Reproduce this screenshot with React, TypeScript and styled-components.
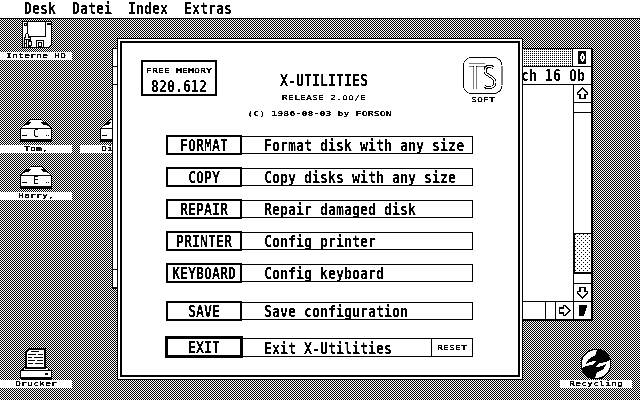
import styled, { createGlobalStyle } from "styled-components";

const GlobalStyle = createGlobalStyle`
  html, body {
    margin: 0;
    padding: 0;
    background: #fff;
    overflow: hidden;
  }
`;

const rows = [
  { name: "FORMAT", text: "Format disk with any size" },
  { name: "COPY", text: "Copy disks with any size" },
  { name: "REPAIR", text: "Repair damaged disk" },
  { name: "PRINTER", text: "Config printer" },
  { name: "KEYBOARD", text: "Config keyboard" },
];

const App = () => {
  return (
    <Screen>
      <GlobalStyle />
      <MenuBar>
        <BigText>Desk</BigText>
        <BigText>Datei</BigText>
        <BigText>Index</BigText>
        <BigText>Extras</BigText>
      </MenuBar>
      <Desktop>
        <DeskIcon $x={0} $y={1}>
          <FloppyIcon />
          <IconLabel><SmallText>Interne HD</SmallText></IconLabel>
        </DeskIcon>
        <DeskIcon $x={0} $y={100}>
          <DriveIcon letter="C" />
          <IconLabel><SmallText>Tom,</SmallText></IconLabel>
        </DeskIcon>
        <DeskIcon $x={80} $y={100}>
          <DriveIcon letter="D" />
          <IconLabel><SmallText>Dick,</SmallText></IconLabel>
        </DeskIcon>
        <DeskIcon $x={0} $y={147}>
          <DriveIcon letter="E" />
          <IconLabel><SmallText>Harry,</SmallText></IconLabel>
        </DeskIcon>
        <DeskIcon $x={0} $y={329}>
          <PrinterIcon />
          <IconLabel><SmallText>Drucker</SmallText></IconLabel>
        </DeskIcon>
        <DeskIcon $x={560} $y={329}>
          <RecycleIcon />
          <IconLabel><SmallText>Recycling</SmallText></IconLabel>
        </DeskIcon>

        <Window $x={112} $y={29} $w={40} $h={241}>
          <BarRow />
          <BarRow />
          <WindowBody />
          <HBar />
        </Window>

        <Window $x={500} $y={29} $w={93} $h={273}>
          <BarRow>
            <TitleDots />
            <Closer>
              <svg width="18" height="17" viewBox="0 0 18 17" shapeRendering="crispEdges">
                <path d="M5 2h8v13H5z" fill="#000" />
                <path d="M9 4h1v1h1v2h1v3h-1v2h-1v1H9v-1H8v-2H7V7h1V5h1z" fill="#fff" />
                <path d="M9 7h1v3H9z" fill="#000" />
              </svg>
            </Closer>
          </BarRow>
          <BarRow>
            <InfoText><BigText>ch 16 Ob</BigText></InfoText>
          </BarRow>
          <WindowBody>
            <Content />
            <ScrollBar>
              <ArrowCell $h={18} $line>
                <ArrowIcon dir={0} />
              </ArrowCell>
              <SpareCell />
              <Track />
              <Thumb />
              <SpareCell />
              <ArrowCell $h={17}>
                <ArrowIcon dir={180} />
              </ArrowCell>
            </ScrollBar>
          </WindowBody>
          <HBar>
            <Filler />
            <HSpare />
            <HArrow><ArrowIcon dir={90} /></HArrow>
            <Sizer>
              <svg width="17" height="17" viewBox="0 0 17 17" shapeRendering="crispEdges">
                <path d="M5 3h8v3h-1v3h-1v3h-1v2H5z" fill="#000" />
              </svg>
            </Sizer>
          </HBar>
        </Window>

        <Dialog>
          <Panel>
            <Header>
              <MemoryBox>
                <SmallText>FREE MEMORY</SmallText>
                <BigText>820.612</BigText>
              </MemoryBox>
              <TitleBlock>
                <BigText>X-UTILITIES</BigText>
                <Release><SmallText>RELEASE 2.00/E</SmallText></Release>
                <Copyright><SmallText>(C) 1986-08-03 by FORSON</SmallText></Copyright>
              </TitleBlock>
              <LogoBlock>
                <LogoIcon />
                <SmallText>SOFT</SmallText>
              </LogoBlock>
            </Header>
            {rows.map((r) => (
              <Row key={r.name}>
                <ActionButton><BigText>{r.name}</BigText></ActionButton>
                <Field><BigText>{r.text}</BigText></Field>
              </Row>
            ))}
            <Row $top={6}>
              <ActionButton><BigText>SAVE</BigText></ActionButton>
              <Field><BigText>Save configuration</BigText></Field>
            </Row>
            <Row $top={4}>
              <ExitButton><BigText>EXIT</BigText></ExitButton>
              <ExitField>
                <BigText>Exit X-Utilities</BigText>
                <ResetCell><SmallText>RESET</SmallText></ResetCell>
              </ExitField>
            </Row>
          </Panel>
        </Dialog>
      </Desktop>
    </Screen>
  );
};

const FloppyIcon = () => (
  <svg width="32" height="32" viewBox="0 0 32 32" shapeRendering="crispEdges">
    <path d="M2.500 1.500H31.500V24.500L28.500 27.500H2.500Z" fill="#fff" stroke="#000" />
    <path d="M4 3h3v3H4zM27 3h4v2h-4z" fill="#000" />
    <path d="M5 4h1v1H5z" fill="#fff" />
    <path d="M7.500 2V16.500H25.500V2" fill="none" stroke="#000" />
    <path d="M5.500 17.500V14.500L7 13L8.500 14.500V17.500H10.500V19H4V17.500Z" fill="#fff" stroke="#000" />
    <path d="M16.500 20.500H23.500V27H16.500Z" fill="#fff" stroke="#000" />
    <path d="M18.500 22.500h3v4h-3z" fill="#fff" stroke="#000" />
    <IconGlyph x="3" y="27" fontSize="8">HD</IconGlyph>
  </svg>
);

const DriveIcon = ({ letter }: { letter: string }) => (
  <svg width="32" height="26" viewBox="0 0 32 26" shapeRendering="crispEdges">
    <path d="M10.500 .5H21.500L31.500 9.500V20.500H.5V9.500Z" fill="#fff" stroke="#000" />
    <path d="M.5 9.500H31.500" stroke="#000" />
    <path d="M0 21h32v1.500H0z" fill="#000" />
    <path d="M7 3h4L9 6H5zM21 3h4l2 3h-4z" fill="#000" />
    <path d="M2 16h5v1H2zM26 16h1v1h-1zM28 16h1v1h-1z" fill="#000" />
    <LetterGlyph x="13" y="18" fontSize="10">{letter}</LetterGlyph>
  </svg>
);

const PrinterIcon = () => (
  <svg width="32" height="32" viewBox="0 0 32 32" shapeRendering="crispEdges">
    <path d="M5 19L1 24V30H31V24L27 19Z" fill="#fff" stroke="#000" />
    <path d="M.5 22.500H31.500V29.500H.5Z" fill="#fff" stroke="#000" />
    <path d="M25 25h3v2h-3zM1 30h30v2H1z" fill="#000" />
    <path d="M9.500 .5H24.500V19.500H5.500V4.500Z" fill="#fff" stroke="#000" strokeWidth="2" />
    <path d="M11 3h8v1h-8zM8 6h8v1H8zM18 6h5v1h-5zM8 9h4v1H8zM14 9h9v1h-9zM8 12h7v1H8zM17 12h6v1h-6zM8 15h5v1H8zM15 15h8v1h-8z" fill="#000" />
  </svg>
);

// one white crescent, the other is the same shape turned half way round
const recycleHalf = "M2 20C0 10 7 2 17 2L15 8C10 9 7 12 6 16C9 14 13 13 16 13L13 17C9 17 5 18 2 20Z";

const RecycleIcon = () => (
  <svg width="32" height="32" viewBox="0 0 32 32">
    <circle cx="16" cy="16" r="15.500" fill="#000" />
    <path d={recycleHalf} fill="#fff" />
    <path d={recycleHalf} fill="#fff" transform="rotate(180 16 16)" />
  </svg>
);

const ArrowIcon = ({ dir }: { dir: number }) => (
  <svg width="13" height="13" viewBox="0 0 15 15" shapeRendering="crispEdges" style={{ transform: `rotate(${dir}deg)` }}>
    <path d="M7.500 1L13.500 7.500V8.500H10.500V13.500H4.500V8.500H1.500V7.500Z" fill="#fff" stroke="#000" strokeWidth="1.500" />
  </svg>
);

const LogoIcon = () => (
  <svg width="40" height="39" viewBox="0 0 40 39">
    <rect x=".5" y=".5" width="38.500" height="36" rx="8" fill="#fff" stroke="#000" />
    <path d="M6 8H22M12 8V32" fill="none" stroke="#000" strokeWidth="3" />
    <path d="M31 11C27 8 22 9 22 14C22 19 32 19 32 25C32 31 25 32 21 29" fill="none" stroke="#000" strokeWidth="3" />
    <path d="M6 8H22M12 8V32" fill="none" stroke="#fff" strokeWidth="1.300" />
    <path d="M31 11C27 8 22 9 22 14C22 19 32 19 32 25C32 31 25 32 21 29" fill="none" stroke="#fff" strokeWidth="1.300" />
  </svg>
);

const Screen = styled.div`
  position: relative;
  width: 640px;
  height: 400px;
  overflow: hidden;
  background: #fff;
  filter: grayscale(1) contrast(8);
`;

const MenuBar = styled.div`
  display: flex;
  align-items: center;
  gap: 16px;
  height: 18px;
  padding-left: 24px;
  border-bottom: 1px solid #000;
  background: #fff;
`;

const BigText = styled.span`
  display: inline-block;
  font-family: "DejaVu Sans Mono", "Liberation Mono", monospace;
  font-weight: 700;
  font-size: 13.3px;
  line-height: 14px;
  white-space: pre;
  color: #000;
  transform: scaleY(1.2);
`;

const SmallText = styled.span`
  display: inline-block;
  font-family: "DejaVu Sans Mono", "Liberation Mono", monospace;
  font-weight: 700;
  font-size: 10px;
  line-height: 8px;
  white-space: pre;
  color: #000;
  transform: scaleY(0.75);
`;

const IconGlyph = styled.text`
  font-family: "DejaVu Sans Mono", "Liberation Mono", monospace;
  font-weight: 700;
  fill: #000;
`;

const LetterGlyph = styled(IconGlyph)`
  font-weight: 400;
`;

const Desktop = styled.div`
  position: relative;
  height: 381px;
  background: repeating-conic-gradient(#000 0 25%, #fff 0 50%) 0 0 / 2px 2px;
`;

const DeskIcon = styled.div<{ $x: number; $y: number }>`
  position: absolute;
  left: ${(p) => p.$x}px;
  top: ${(p) => p.$y}px;
  width: 72px;
  display: flex;
  flex-direction: column;
  align-items: center;
`;

const IconLabel = styled.div`
  display: flex;
  justify-content: center;
  align-items: center;
  width: 72px;
  height: 8px;
  background: #fff;
`;

const Window = styled.div<{ $x: number; $y: number; $w: number; $h: number }>`
  position: absolute;
  left: ${(p) => p.$x}px;
  top: ${(p) => p.$y}px;
  width: ${(p) => p.$w}px;
  height: ${(p) => p.$h}px;
  box-sizing: border-box;
  display: flex;
  flex-direction: column;
  background: #fff;
  border-top: 1px solid #000;
  border-left: 1px solid #000;
  border-right: 2px solid #000;
  border-bottom: 2px solid #000;
`;

const BarRow = styled.div`
  display: flex;
  flex: none;
  height: 18px;
  box-sizing: border-box;
  border-bottom: 1px solid #000;
`;

const TitleDots = styled.div`
  flex: 1;
  background: conic-gradient(#000 25%, #fff 0) 0 0 / 2px 2px;
`;

const Closer = styled.div`
  display: flex;
  width: 18px;
  border-left: 1px solid #000;
`;

const InfoText = styled.div`
  flex: 1;
  display: flex;
  align-items: center;
  justify-content: flex-end;
  padding-right: 6px;
`;

const WindowBody = styled.div`
  flex: 1;
  display: flex;
  min-height: 0;
`;

const Content = styled.div`
  flex: 1;
`;

const ScrollBar = styled.div`
  display: flex;
  flex-direction: column;
  width: 18px;
  border-left: 1px solid #000;
  box-sizing: border-box;
`;

const ArrowCell = styled.div<{ $h: number; $line?: boolean }>`
  display: flex;
  align-items: center;
  justify-content: center;
  flex: none;
  height: ${(p) => p.$h}px;
  box-sizing: border-box;
  border-bottom: ${(p) => (p.$line ? "1px solid #000" : "none")};
`;

const SpareCell = styled.div`
  flex: none;
  height: 10px;
  box-sizing: border-box;
  border-bottom: 1px solid #000;
`;

const Track = styled.div`
  flex: 1;
  border-bottom: 1px solid #000;
`;

const Thumb = styled.div`
  flex: none;
  height: 38px;
  border-left: 1px solid #000;
  border-bottom: 2px solid #000;
  background: #fff url("data:image/svg+xml,%3Csvg xmlns='http://www.w3.org/2000/svg' width='4' height='4' shape-rendering='crispEdges'%3E%3Crect width='1' height='1'/%3E%3Crect x='2' y='2' width='1' height='1'/%3E%3C/svg%3E");
`;

const HBar = styled.div`
  display: flex;
  flex: none;
  height: 18px;
  box-sizing: border-box;
  border-top: 1px solid #000;
`;

const Filler = styled.div`
  flex: 1;
  border-right: 1px solid #000;
`;

const HSpare = styled.div`
  width: 10px;
  box-sizing: border-box;
  border-right: 1px solid #000;
`;

const HArrow = styled.div`
  display: flex;
  align-items: center;
  justify-content: center;
  width: 18px;
  box-sizing: border-box;
  border-right: 1px solid #000;
`;

const Sizer = styled.div`
  display: flex;
  width: 17px;
`;

const Dialog = styled.div`
  position: absolute;
  left: 117px;
  top: 19px;
  width: 406px;
  height: 342px;
  box-sizing: border-box;
  padding: 2px;
  border: 1px solid #000;
  background: #fff;
`;

const Panel = styled.div`
  display: flex;
  flex-direction: column;
  height: 100%;
  box-sizing: border-box;
  border: 2px solid #000;
  padding: 14px 15px 0 19px;
`;

const Header = styled.div`
  display: flex;
  flex: none;
  height: 78px;
`;

const MemoryBox = styled.div`
  display: flex;
  flex: none;
  flex-direction: column;
  align-items: center;
  gap: 5px;
  width: 76px;
  height: 36px;
  margin-top: 3px;
  padding-top: 5px;
  box-sizing: border-box;
  border: 2px solid #000;
`;

const TitleBlock = styled.div`
  display: flex;
  flex: none;
  flex-direction: column;
  align-items: center;
  width: 214px;
  margin-top: 17px;
`;

const Release = styled.div`
  display: flex;
  margin-top: 6px;
`;

const Copyright = styled.div`
  display: flex;
  margin-top: 8px;
  margin-right: 9px;
`;

const LogoBlock = styled.div`
  display: flex;
  flex-direction: column;
  align-items: center;
  margin-left: auto;
`;

const Row = styled.div<{ $top?: number }>`
  display: flex;
  align-items: center;
  flex: none;
  width: 307px;
  height: 20px;
  margin-top: ${(p) => p.$top ?? 0}px;
  margin-bottom: 12px;
  margin-left: 25px;
`;

const ActionButton = styled.button`
  display: flex;
  align-items: center;
  justify-content: center;
  flex: none;
  width: 76px;
  height: 20px;
  padding: 1px 0 0;
  box-sizing: border-box;
  background: #fff;
  border: 2px solid #000;
`;

const ExitButton = styled(ActionButton)`
  width: 78px;
  height: 22px;
  margin-left: -1px;
  margin-right: -1px;
  padding-top: 2px;
  border-width: 3px;
  position: relative;
`;

const Field = styled.div`
  display: flex;
  flex: 1;
  align-items: center;
  height: 18px;
  box-sizing: border-box;
  padding: 1px 0 0 22px;
  border: 1px solid #000;
  border-left: none;
`;

const ExitField = styled(Field)`
  align-self: flex-start;
  height: 19px;
  margin-top: 1px;
  padding-top: 2px;
`;

const ResetCell = styled.div`
  display: flex;
  align-items: center;
  justify-content: center;
  align-self: stretch;
  width: 40px;
  margin-top: -2px;
  margin-left: auto;
  border-left: 1px solid #000;
`;

export default App;
